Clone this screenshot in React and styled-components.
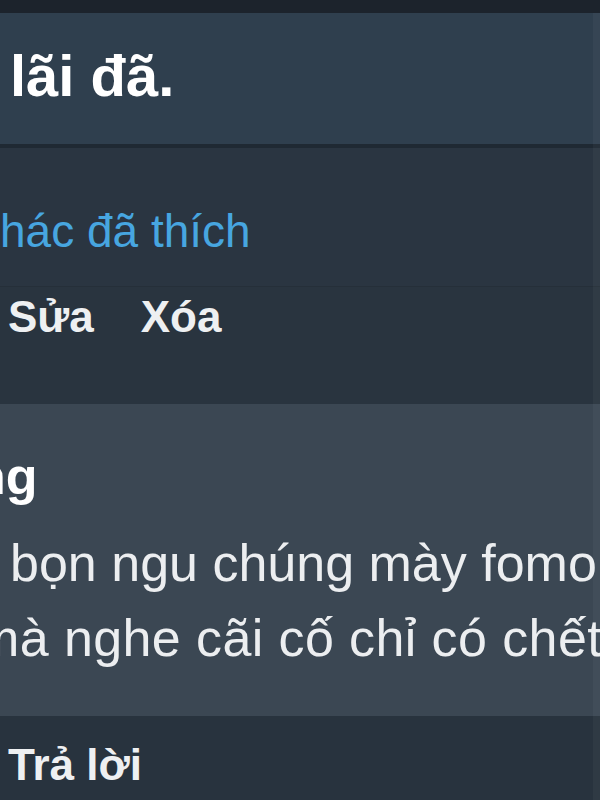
import React from 'react'
import styled, { createGlobalStyle } from 'styled-components'

const GlobalStyle = createGlobalStyle`
  html, body {
    margin: 0;
    padding: 0;
    background: #28333e;
  }
  body {
    font-family: "Liberation Sans", Arial, sans-serif;
    color: #eef0f2;
  }
`

const Page = styled.div`
  position: relative;
  width: 600px;
  height: 800px;
  overflow: hidden;
  background: #28333e;
  white-space: nowrap;
`

const TopBar = styled.div`
  height: 13px;
  background: #1c232c;
`

const Header = styled.div`
  height: 131px;
  background: #2f3f4e;
  border-bottom: 4px solid #1f2933;
`

const Title = styled.h1`
  margin: 0;
  padding: 0 0 5px 10px;
  font-size: 58px;
  line-height: 126px;
  font-weight: 700;
  color: #ffffff;
`

const LikesRow = styled.div`
  padding: 55px 0 27px;
  background: #2a3541;
  border-bottom: 1px solid #252f39;
`

const LikeText = styled.a`
  display: block;
  margin-left: ${p => p.$shift || 0}px;
  font-size: 46px;
  line-height: 56px;
  color: #47a6e0;
  text-decoration: none;
`

const ActionsRow = styled.div`
  display: flex;
  gap: 47px;
  padding: ${p => p.$top}px 0 ${p => p.$bottom}px 8px;
  background: ${p => p.$bg};
`

const ActionLink = styled.a`
  font-size: 44px;
  line-height: 56px;
  font-weight: 700;
  color: #eef0f2;
  text-decoration: none;
`

const Post = styled.div`
  padding: 40px 0 40px;
  background: #3b4753;
`

const Author = styled.div`
  margin-left: ${p => p.$shift || 0}px;
  font-size: 52px;
  line-height: 64px;
  font-weight: 700;
  color: #ffffff;
`

const Body = styled.div`
  margin-top: 18px;
`

const BodyLine = styled.div`
  margin-left: ${p => p.$shift || 0}px;
  letter-spacing: ${p => p.$spacing || 0}px;
  font-size: 52px;
  line-height: 75px;
  color: #eceef0;
`

const ScrollEdge = styled.div`
  position: absolute;
  top: 13px;
  right: 0;
  width: 7px;
  bottom: 0;
  background: rgba(255, 255, 255, 0.035);
`

export default function App() {
  return (
    <Page>
      <GlobalStyle />
      <TopBar />
      <Header>
        <Title>lãi đã.</Title>
      </Header>
      <LikesRow>
        <LikeText href="#" $shift={-23}>khác đã thích</LikeText>
      </LikesRow>
      <ActionsRow $top={2} $bottom={59} $bg="#29343f">
        <ActionLink href="#">Sửa</ActionLink>
        <ActionLink href="#">Xóa</ActionLink>
      </ActionsRow>
      <Post>
        <Author $shift={-26}>ng</Author>
        <Body>
          <BodyLine $shift={10}>bọn ngu chúng mày fomo</BodyLine>
          <BodyLine $shift={-24} $spacing={0.4}>mà nghe cãi cố chỉ có chết</BodyLine>
        </Body>
      </Post>
      <ActionsRow $top={21} $bottom={7} $bg="#28333e">
        <ActionLink href="#">Trả lời</ActionLink>
      </ActionsRow>
      <ScrollEdge />
    </Page>
  )
}
